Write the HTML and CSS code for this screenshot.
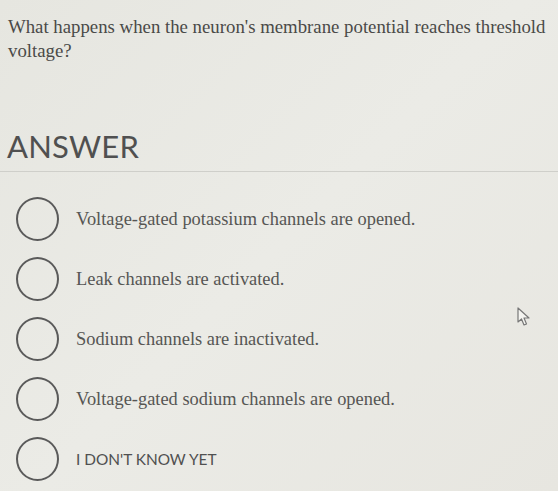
FILE: index.html
```html
<!DOCTYPE html>
<html>
<head>
<meta charset="utf-8">
<link rel="stylesheet" href="styles.css">
</head>
<body>
<div class="page">
  <p class="question">What happens when the neuron's membrane potential reaches threshold voltage?</p>
  <h2 class="answer-title">ANSWER</h2>
  <div class="divider"></div>
  <ul class="options">
    <li class="option"><span class="radio"></span><span class="label">Voltage-gated potassium channels are opened.</span></li>
    <li class="option"><span class="radio"></span><span class="label">Leak channels are activated.</span></li>
    <li class="option"><span class="radio"></span><span class="label">Sodium channels are inactivated.</span></li>
    <li class="option"><span class="radio"></span><span class="label">Voltage-gated sodium channels are opened.</span></li>
    <li class="option"><span class="radio"></span><span class="label sans">I DON'T KNOW YET</span></li>
  </ul>
  <svg class="cursor" width="14" height="20" viewBox="0 0 14 20"><path d="M1 1 L1 15 L4.5 12 L7 18 L9.5 17 L7 11 L12 11 Z" fill="#f4f4f0" stroke="#777" stroke-width="1.2" stroke-linejoin="round"/></svg>
</div>
</body>
</html>
```
FILE: styles.css
```css
html, body {
  margin: 0;
  padding: 0;
  background: #e8e8e3;
}
.page {
  position: relative;
  width: 558px;
  height: 491px;
  overflow: hidden;
  background: linear-gradient(135deg, #e6e6e0 0%, #ebebe6 50%, #e7e6e0 100%);
}
.question {
  margin: 0;
  padding: 15px 6px 0 8px;
  font-family: "Liberation Serif", serif;
  font-size: 18.8px;
  line-height: 24px;
  color: #4a4a48;
}
.answer-title {
  margin: 0;
  padding: 64px 0 0 7px;
  font-family: Lato, sans-serif;
  font-weight: 400;
  font-size: 31px;
  line-height: 38px;
  letter-spacing: 0.2px;
  color: #505050;
}
.divider {
  margin-top: 6px;
  height: 1px;
  background: #cfcfca;
}
.options {
  list-style: none;
  margin: 0;
  padding: 25px 0 0 16px;
  display: flex;
  flex-direction: column;
  gap: 16px;
}
.option {
  display: flex;
  align-items: center;
  gap: 17px;
  height: 44px;
}
.radio {
  width: 39px;
  height: 40px;
  border: 2px solid #5a5a5a;
  border-radius: 50%;
  flex: none;
}
.label {
  font-family: "Liberation Serif", serif;
  font-size: 18.4px;
  color: #565654;
}
.label.sans {
  font-family: Lato, sans-serif;
  font-size: 15.4px;
  color: #505050;
}
.cursor {
  position: absolute;
  left: 517px;
  top: 307px;
}
```
